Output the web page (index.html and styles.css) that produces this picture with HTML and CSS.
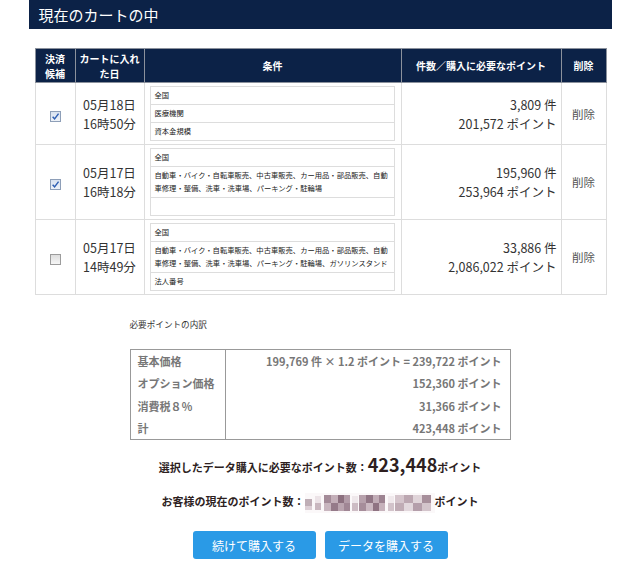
FILE: index.html
```html
<!DOCTYPE html>
<html lang="ja">
<head>
<meta charset="utf-8">
<title>現在のカートの中</title>
<link rel="stylesheet" href="styles.css">
</head>
<body>
<div class="page">
  <h1 class="title">現在のカートの中</h1>

  <table class="cart">
    <colgroup>
      <col class="c-sel"><col class="c-date"><col class="c-cond"><col class="c-pts"><col class="c-del">
    </colgroup>
    <thead>
      <tr>
        <th>決済<br>候補</th>
        <th>カートに入れ<br>た日</th>
        <th>条件</th>
        <th>件数／購入に必要なポイント</th>
        <th>削除</th>
      </tr>
    </thead>
    <tbody>
      <tr>
        <td class="sel"><span class="cb checked"><svg viewBox="0 0 10 10" width="9" height="9"><path d="M1.8 5.2 L4 7.6 L8.4 1.8" fill="none" stroke="#2f5fb3" stroke-width="1.6"/></svg></span></td>
        <td class="date">05月18日<br>16時50分</td>
        <td class="cond">
          <ul class="conds">
            <li>全国</li>
            <li>医療機関</li>
            <li>資本金規模</li>
          </ul>
        </td>
        <td class="pts">3,809 件<br>201,572 ポイント</td>
        <td class="del">削除</td>
      </tr>
      <tr>
        <td class="sel"><span class="cb checked"><svg viewBox="0 0 10 10" width="9" height="9"><path d="M1.8 5.2 L4 7.6 L8.4 1.8" fill="none" stroke="#2f5fb3" stroke-width="1.6"/></svg></span></td>
        <td class="date">05月17日<br>16時18分</td>
        <td class="cond">
          <ul class="conds">
            <li>全国</li>
            <li>自動車・バイク・自転車販売、中古車販売、カー用品・部品販売、自動車修理・整備、洗車・洗車場、パーキング・駐輪場</li>
            <li></li>
          </ul>
        </td>
        <td class="pts">195,960 件<br>253,964 ポイント</td>
        <td class="del">削除</td>
      </tr>
      <tr>
        <td class="sel"><span class="cb"></span></td>
        <td class="date">05月17日<br>14時49分</td>
        <td class="cond">
          <ul class="conds">
            <li>全国</li>
            <li>自動車・バイク・自転車販売、中古車販売、カー用品・部品販売、自動車修理・整備、洗車・洗車場、パーキング・駐輪場、ガソリンスタンド</li>
            <li>法人番号</li>
          </ul>
        </td>
        <td class="pts">33,886 件<br>2,086,022 ポイント</td>
        <td class="del">削除</td>
      </tr>
    </tbody>
  </table>

  <section class="breakdown">
    <p class="bd-caption">必要ポイントの内訳</p>
    <table class="bd-table">
      <tr><td class="label">基本価格</td><td class="val">199,769 件 × 1.2 ポイント = 239,722 ポイント</td></tr>
      <tr><td class="label">オプション価格</td><td class="val">152,360 ポイント</td></tr>
      <tr><td class="label">消費税８％</td><td class="val">31,366 ポイント</td></tr>
      <tr><td class="label">計</td><td class="val">423,448 ポイント</td></tr>
    </table>
  </section>

  <p class="total">選択したデータ購入に必要なポイント数：<span class="big">423,448</span>ポイント</p>
  <p class="current">お客様の現在のポイント数：<svg class="mosaic" viewBox="0 0 130 20" width="130" height="20">
      <rect x="0" y="0" width="130" height="20" fill="#fbf8f9"/>
      <rect x="0" y="6" width="7" height="7" fill="#bfaeb6"/>
      <rect x="0" y="13" width="7" height="4" fill="#dccfd5"/>
      <rect x="10" y="10" width="6" height="7" fill="#c9b7bf"/>
      <rect x="10" y="3" width="6" height="7" fill="#ece3e7"/>
      <rect x="19" y="2" width="7" height="8" fill="#a48b98"/>
      <rect x="26" y="2" width="7" height="8" fill="#c4afb9"/>
      <rect x="33" y="2" width="6" height="8" fill="#8c707f"/>
      <rect x="39" y="2" width="6" height="8" fill="#b29ba7"/>
      <rect x="19" y="10" width="7" height="8" fill="#c8b5be"/>
      <rect x="26" y="10" width="7" height="8" fill="#957a89"/>
      <rect x="33" y="10" width="6" height="8" fill="#baa4af"/>
      <rect x="39" y="10" width="6" height="8" fill="#a08694"/>
      <rect x="47" y="10" width="6" height="8" fill="#cdbcc4"/>
      <rect x="47" y="3" width="6" height="7" fill="#efe8eb"/>
      <rect x="54" y="2" width="7" height="8" fill="#b7a1ac"/>
      <rect x="61" y="2" width="7" height="8" fill="#917685"/>
      <rect x="68" y="2" width="6" height="8" fill="#c1acb6"/>
      <rect x="74" y="2" width="6" height="8" fill="#9d8391"/>
      <rect x="54" y="10" width="7" height="8" fill="#a68d9a"/>
      <rect x="61" y="10" width="7" height="8" fill="#cbb8c1"/>
      <rect x="68" y="10" width="6" height="8" fill="#8f7382"/>
      <rect x="74" y="10" width="6" height="8" fill="#c6b2bb"/>
      <rect x="83" y="10" width="6" height="8" fill="#d2c3ca"/>
      <rect x="83" y="3" width="6" height="7" fill="#f0e9ec"/>
      <rect x="90" y="2" width="9" height="8" fill="#d5c5cc"/>
      <rect x="99" y="2" width="9" height="8" fill="#bca7b1"/>
      <rect x="108" y="2" width="9" height="8" fill="#e0d4d9"/>
      <rect x="117" y="2" width="9" height="8" fill="#a78f9b"/>
      <rect x="90" y="10" width="9" height="8" fill="#c0acb5"/>
      <rect x="99" y="10" width="9" height="8" fill="#e2d7dc"/>
      <rect x="108" y="10" width="9" height="8" fill="#b49eaa"/>
      <rect x="117" y="10" width="9" height="8" fill="#d3c4cb"/>
    </svg>ポイント</p>

  <div class="actions">
    <button class="btn" type="button">続けて購入する</button>
    <button class="btn" type="button">データを購入する</button>
  </div>
</div>
</body>
</html>
```

FILE: styles.css
```css
* { box-sizing: border-box; }

body {
  margin: 0;
  background: #fff;
  color: #333;
  font-family: "Noto Sans CJK JP", "DejaVu Sans", sans-serif;
}

.page {
  width: 583px;
  margin: 0 auto;
}

.title {
  margin: 0;
  height: 29px;
  padding-left: 10px;
  background: #0c2247;
  color: #fff;
  font-size: 15px;
  font-weight: 400;
  line-height: 29px;
}

/* cart table */
.cart {
  width: 571px;
  margin: 19px 0 0 6px;
  border-collapse: collapse;
  table-layout: fixed;
}
.c-sel { width: 40px; }
.c-date { width: 69px; }
.c-cond { width: 257px; }
.c-pts { width: 160px; }
.c-del { width: 45px; }

.cart th {
  height: 34px;
  padding: 0;
  background: #0c2247;
  border: 1px solid #8b919c;
  color: #fff;
  font-size: 10px;
  font-weight: 700;
  line-height: 15px;
  text-align: center;
}

.cart td {
  border: 1px solid #ddd;
  vertical-align: middle;
  padding: 0;
}

.sel { text-align: center; }

.cb {
  display: inline-flex;
  align-items: center;
  justify-content: center;
  width: 11px;
  height: 11px;
  border: 1px solid #9c9c9c;
  background: linear-gradient(#dedede, #f6f6f6);
  vertical-align: middle;
}
.cb.checked {
  border-color: #8e9fb8;
  background: linear-gradient(#d8e2f0, #eef2f8);
}

.date {
  text-align: center;
  font-size: 12.5px;
  line-height: 19px;
  color: #333;
}

.cond { padding: 3px 6px 3px 5px !important; }

.conds {
  list-style: none;
  margin: 0;
  padding: 0;
  border: 1px solid #ddd;
}
.conds li {
  min-height: 18px;
  padding: 2px 4px;
  border-bottom: 1px solid #ddd;
  font-size: 7.3px;
  line-height: 13px;
  color: #222;
}
.conds li:last-child { border-bottom: none; min-height: 17px; }

.pts {
  text-align: right;
  padding-right: 4px !important;
  font-size: 12.5px;
  line-height: 19px;
  color: #333;
}

.del {
  text-align: center;
  font-size: 11.5px;
  color: #555;
}

/* breakdown */
.breakdown {
  width: 381px;
  margin: 0 auto;
}
.bd-caption {
  margin: 23px 0 19px;
  font-size: 8.6px;
  line-height: 12px;
  color: #333;
}
.bd-table {
  width: 100%;
  border: 1px solid #999;
  border-collapse: collapse;
}
.bd-table td {
  height: 22.5px;
  padding: 0 8px 0 7px;
  font-size: 11px;
  font-weight: 700;
  color: #777;
}
.bd-table .label {
  width: 95px;
  border-right: 1px solid #999;
}
.bd-table .val { text-align: right; }

/* totals */
.total,
.current {
  margin: 0;
  text-align: center;
  font-weight: 700;
  font-size: 11px;
  color: #2e1f1f;
}
.total { margin-top: 12px; line-height: 24px; }
.total .big { font-size: 18px; }
.current { margin-top: 12px; line-height: 20px; }
.mosaic { vertical-align: middle; }

.actions {
  display: flex;
  justify-content: center;
  gap: 9px;
  margin-top: 18px;
}
.btn {
  width: 123px;
  height: 28px;
  border: none;
  border-radius: 3px;
  background: #2a9ae6;
  color: #fff;
  font-family: inherit;
  font-size: 12px;
}
```
